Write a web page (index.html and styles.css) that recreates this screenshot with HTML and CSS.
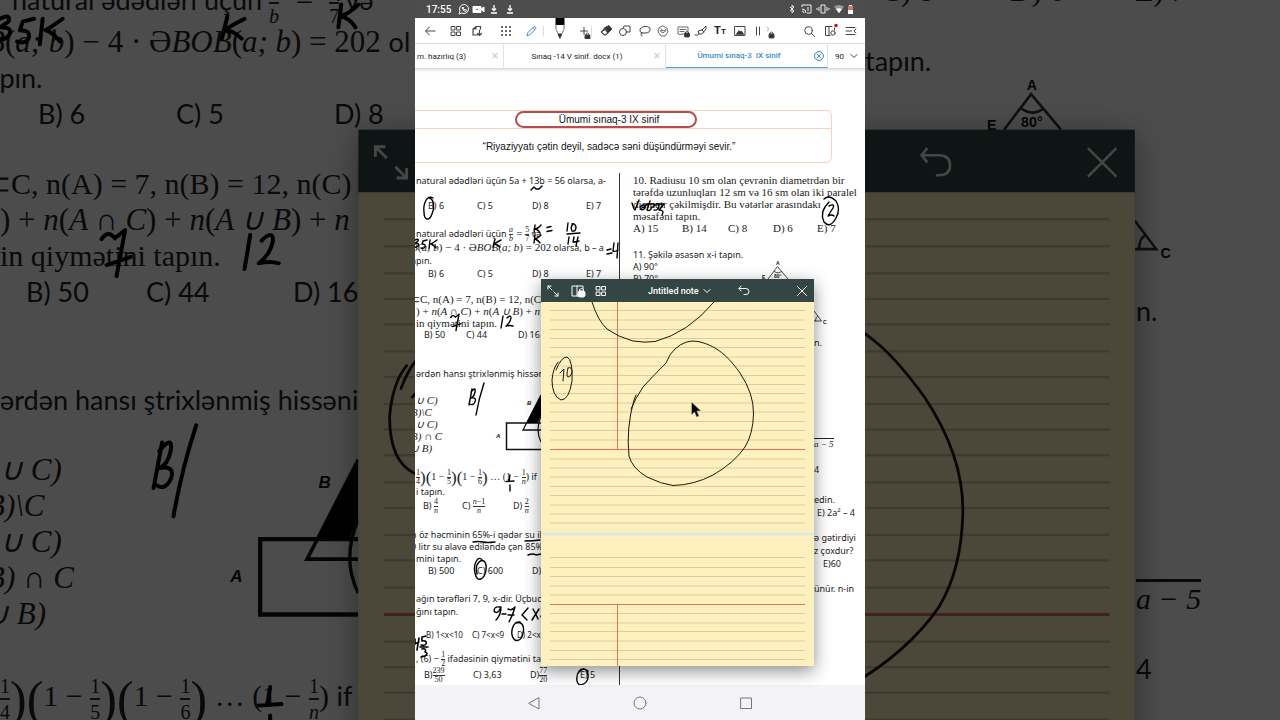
FILE: index.html
```html
<!DOCTYPE html>
<html lang="az">
<head>
<meta charset="utf-8">
<title>Ümumi sınaq-3 IX sinif</title>
<link rel="stylesheet" href="styles.css">
</head>
<body>
<svg class="defs" aria-hidden="true">
  <defs>
    <g id="figures" fill="none" stroke="#111" stroke-width="1">
      <path d="M541 423H506.500V449.500H541" stroke-width="1.500"/>
      <path d="M541 430H523L541 395M541 406" stroke-width="1.300"/>
      <path d="M541 395V416Q539 419 538 423H526.500Z" fill="#000" stroke="none"/>
      <path d="M541 416Q535 430 541 442" stroke-width="1.200"/>
      <path d="M768 279L777.500 266.500L788 279M774 271.500Q778 274.500 782 271.500M814 311L821.500 321H814M815.500 321Q815.500 317 818 316" stroke="#333" stroke-width=".9"/>
      <g class="figure-label">
        <text x="527" y="405">B</text><text x="496" y="438">A</text>
        <text class="figure-small" x="776" y="265">A</text><text class="figure-small" x="762" y="279">E</text>
        <text class="figure-small" x="774" y="278">80°</text><text class="figure-small" x="823" y="324">C</text>
      </g>
    </g>
    <g id="ink" fill="none" stroke="#000" stroke-width="1.400" stroke-linecap="round" stroke-linejoin="round">
      <path d="M531 190l3-3 2 2h3l3-3"/>
      <path d="M433 198c-6-4-10 6-9 14 0 8 5 10 8 2 3-7 2-15-3-16"/>
      <path d="M535 225l-1 8M541 225q-3 4-7 4 4 0 6 4M535 235l-1 8M541 235q-3 3-6 4 3 1 5 4M547 227.500l4-1M547 231.500l5-1"/>
      <path d="M568 223l-1 8M573 224q-3 3-1 7 4 1 4-4-1-4-4-3M567 234l13-1M569 237l-1 7M574 237l-1 5 6-1M578 237l-2 9"/>
      <path d="M415 243q4-2 3 1l-3 2q5 0 3 3-2 2-4 1M427 243l-4 1-1 3q4 0 3 3-1 2-4 1M430 243l-1 9M437 243q-4 3-6 4 3 1 5 4" transform="translate(0 -3)"/>
      <path d="M495 239l-2 8M501 240q-4 2-7 4 3 0 6 3M607 250l4-1M607 254l5-1M614 243l-1 8q2 1 5-1M618 243l-1 15"/>
      <path d="M450.700 317.500Q453 314 455.400 317.200L459 314.300L456 330.500M452.500 326.600L461 323.700M503 316l-2 12M507 318q4-4 4 0-1 5-5 8 4-1 7 0"/>
      <path d="M472 389l-3 16M471 392q5-6 4 0-1 5-4 6 6-1 4 4-2 4-5 2M484 383q-5 15-8 32"/>
      <path d="M510 475l-1 6M506 481.500l8-.5M510 485v6M473 542q6-1 10 0t12 0M525 541q8 0 15-1M528 555q5-2 8 0l5-1"/>
      <path d="M483 561c-5-8-10 4-8 12 2 11 10 6 11-3 1-8-3-12-7-8-3 3-3 8-2 12"/>
      <path d="M500 607q-6-1-6 4 2 3 5 0l2-4q0 8-5 13M502 614h4M508 609q4 2 7-2-2 8-6 15M508 615h6M528 608l-6 7 5 5M533 609q3 5 5 10M539 609l-7 11M541 616v1"/>
      <path d="M520 622c-6-1-9 7-8 13 2 9 10 6 11-2 2-8-2-12-7-10M588 671c-8-6-12 3-11 10 1 7 10 3 11-3 1-8-4-12-9-6"/>
      <path d="M415 639v5l4-2M419 638l-2 12M426 636l-4 1v4q5-1 4 3-1 2-5 1M420 647h8M422 649q5-1 3 3 4 1 0 4l-4 1" stroke-width="1.600"/>
      <path d="M632 203q2 7 3 7l4-10M640 207q5-5 5 1-2 3-5 1l7-4M650 201l-3 9q3 2 5-3M646 204h8M653 207q5-6 6-1-1 5-5 4M658 204h6l-5 6q6 0 3 5"/>
      <path d="M824 199q5-5 12 2 5 8 0 17-6 11-12 4-5-10 5-20M829 206q6-3 4 2l-5 8q4-2 6 0"/>
    </g>
    <g id="ruled-paper">
      <rect x="541" y="301" width="273" height="365" fill="#fef1bf"/>
      <path stroke="#cfc49b" stroke-width=".8" d="M550 310.500H805M550 320H805M550 329.500H805M550 338.500H805M550 347.500H805M550 357H805M550 366H805M550 375.500H805M550 384.500H805M550 393.500H805M550 403H805M550 412H805M550 421.500H805M550 430.500H805M550 440H805M550 459H805M550 468H805M550 477H805M550 486.500H805M550 495.500H805M550 505H805M550 514H805M550 523H805M550 557.500H805M550 567.500H805M550 576.500H805M550 586H805M550 595H805M550 613.500H805M550 623H805M550 631.500H805M550 641H805M550 650.500H805M550 659.500H805"/>
      <path stroke="#e0705c" d="M550 449.500H805M550 604.500H805M617.500 302V449M617.500 604V666"/>
      <path stroke="#e3e7de" stroke-width="3" d="M541 534H814"/>
      <g fill="none" stroke="#1d180d" stroke-width="1" stroke-linecap="round" stroke-linejoin="round">
        <path d="M592 302Q598 321 607 329Q618 337 633 341Q646 343 655 341.500Q688 333 714 302"/>
        <path d="M631 409Q635 399 643 387Q655 374 666 363Q670 353 675 349Q686 339 698 341.500C720 346 732 362 740 373Q754 394 753.500 414Q753 434 745 447Q734 463 713 475Q694 485 673 485.500Q661 484 647 477Q632 468 629 456Q626 428 634 400L636 395"/>
        <path d="M556 370Q561 357 567 357Q573 360 572 381Q569 400 561 400Q552 396 552 380Q553 368 558 362M560 373l4-4-1 12M568 368q-2 8 0 9 3 0 4-5 0-6-4-4"/>
      </g>
    </g>
    <g id="lock"><rect x="-2.500" y="0" width="5" height="4" rx=".8" fill="#333"/><path d="M-1.500 0v-1q1.500-2 3 0v1" fill="none" stroke="#333" stroke-width=".8"/></g>
  </defs>
</svg>

<main class="stage">
  <div class="backdrop" aria-hidden="true">
    <div class="enlarged enlarged-left">
      <p class="shift">natural ədədləri üçün <span class="frac"><i>a</i><i>b</i></span> <span class="math">&nbsp;=&nbsp;</span> <span class="frac"><span>5</span><span>7</span></span> və</p>
      <p class="math cut">B<span class="up">(</span>a; b<span class="up">)</span> <span class="up">− 4 · Ə</span>BOB<span class="up">(</span>a; b<span class="up">) = 202</span> <span class="sans">ol</span></p>
      <p class="cut">apın.</p>
      <p class="big-options"><span>B) 6</span><span>C) 5</span><span>D) 8</span></p>
      <p class="serif cut big-set">⊂C, n(A) = 7, n(B) = 12, n(C) =</p>
      <p class="math"><span class="up">) +</span> n<span class="up">(</span>A ∩ C<span class="up">) +</span> n<span class="up">(</span>A ∪ B<span class="up">) +</span> n</p>
      <p class="serif">in qiymətini tapın.</p>
      <p class="big-options big-options-b"><span>B) 50</span><span>C) 44</span><span>D) 16</span></p>
      <p class="big-ask">ərdən hansı ştrixlənmiş hissəni</p>
      <div class="big-list math"><p>∪ C)</p><p class="cut">B)\C</p><p>∪ C)</p><p class="cut">B) ∩ C</p><p class="cut">∪ B)</p></div>
      <p class="product serif"><span class="frac"><span>1</span><span>4</span></span><b>)</b><b>(</b>1 − <span class="frac"><span>1</span><span>5</span></span><b>)</b><b>(</b>1 − <span class="frac"><span>1</span><span>6</span></span><b>)</b> … (1 − <span class="frac"><span>1</span><i>n</i></span>) <span class="sans">if</span></p>
    </div>
    <svg class="overlay" viewBox="415 233.400 146 253.200" preserveAspectRatio="xMinYMid slice">
      <use href="#figures"/><use href="#ink"/>
      <g class="shaded"><rect x="541" y="279" width="273" height="23" fill="#344644"/><use href="#ruled-paper"/></g>
      <path d="M547 287l4 4M547 290.500V287h3.500M554 294l4 4M558 294.500V298h-3.500" transform="translate(0 -2)" fill="none" stroke="#e8efed"/>
    </svg>
  </div>

  <section class="screen">
    <header class="status">
      <time>17:55</time>
      <svg viewBox="0 0 60 14" width="60" height="14" fill="none" stroke="#fff">
        <path d="M2 12l1-3a4.500 4.500 0 1 1 2 2zM5 5.500q1 4 4 4l1-1-1.500-1-1 .5-1-1.500.3-1z"/>
        <path d="M16 4.500h8v6h-8zM24 7l3-2v5z" fill="#fff"/><circle cx="20" cy="7.500" r=".8" fill="#4d4d4d" stroke="none"/>
        <path d="M37 3v5M35 6.500l2 2 2-2M34 11h6M53 3v5M51 6.500l2 2 2-2M50 11h6" stroke-width="1.300"/>
      </svg>
      <svg class="status-right" viewBox="0 0 78 14" width="78" height="14" fill="none" stroke="#eee">
        <path d="M3 5l4 4-2 2V3l2 2-4 4"/>
        <path d="M15 5V3h9v8h-4M15 7q4 0 4 4M15 9q2 0 2 2M21 5v4"/>
        <path d="M34 3h4v8h-4zM32 5v4M40 5v4M30 6v2M42 6v2"/>
        <path d="M47 4.500q5-3 10 0l-5 7z" fill="#999" stroke="none"/><path d="M49 7q3-1.500 6 0l-3 4z" fill="#fff" stroke="none"/>
        <path d="M61 4h1V3h3v1h1v8h-5z" fill="#fff" stroke="none"/><path d="M61 4h5v4h-5z" fill="#c77c65" stroke="none"/>
      </svg>
    </header>

    <nav class="toolbar" aria-label="Tools">
      <button aria-label="Back"><svg viewBox="0 0 16 16"><path d="M13 8H4M7.500 4L3.500 8l4 4"/></svg></button>
      <button aria-label="Thumbnails"><svg viewBox="0 0 16 16"><path d="M3.500 3.500h3.500V7H3.500zM9 3.500h3.500V7H9zM3.500 9h3.500v3.500H3.500zM9 9h3.500v3.500H9z"/></svg></button>
      <button aria-label="Export page"><svg viewBox="0 0 16 16"><path d="M8.500 12H4V6l3-2.500h4.500V6M7 3.500V6H4M10.500 7v5M8.500 10.500l2 2 2-2" stroke-width="1.200"/></svg></button>
      <button aria-label="Apps"><svg viewBox="0 0 16 16"><path d="M4 4h.1M8 4h.1M12 4h.1M4 8h.1M8 8h.1M12 8h.1M4 12h.1M8 12h.1M12 12h.1" stroke-width="2"/></svg></button>
      <button aria-label="Edit" class="blue"><svg viewBox="0 0 16 16"><path d="M4 12.500l1-3 6-6q2 0 2 2l-6 6zM10 5l1.500 1.500"/></svg></button>
      <button aria-label="Pen" class="divided pen-tool"><svg viewBox="0 0 16 25"><path d="M3.500 0h9v7h-9z" fill="#000" stroke="none"/><path d="M4 7v4l4 9 4-9V7" stroke="#777"/><path d="M6.500 16h3L8 20z" fill="#000"/></svg></button>
      <button aria-label="Add"><svg viewBox="0 0 16 16"><path d="M8 4.500v7M4.500 8h7"/><use href="#lock" x="11.500" y="12"/></svg></button>
      <button aria-label="Eraser" class="divided"><svg viewBox="0 0 16 16"><path d="M7 4.500l4-2 3 3.500-4 4z" fill="#333"/><path d="M7 4.500L3 9l3 3h2l2-2z" fill="#444"/><path d="M4 9l3-2 2 3-2 1.500z" fill="#fff" stroke="none"/></svg></button>
      <button aria-label="Shapes"><svg viewBox="0 0 16 16"><circle cx="6" cy="9" r="3.500"/><path d="M6 5l1-2h6v6h-3"/></svg></button>
      <button aria-label="Lasso"><svg viewBox="0 0 16 16"><path d="M5 10q-3-1-2-4 5-5 10-1 1 5-5 5H6q-2-1-2 1l1 2"/></svg></button>
      <button aria-label="Stickers"><svg viewBox="0 0 16 16"><path d="M8 3l4 2 1 4-3 4H6L3 9l1-4zM5.500 8q2 4 5 0zM6 6l1 .5M10 6l1 1" stroke-width=".8"/></svg></button>
      <button aria-label="Comment"><svg viewBox="0 0 16 16"><path d="M9 11H6l-1 1-1-1H3V4h10v4M5 6.500h6M5 8.500h4" stroke-width=".8"/><use href="#lock" x="12" y="10"/></svg></button>
      <button aria-label="Brush"><svg viewBox="0 0 16 16"><path d="M2 12q3 1 4-1l-1-3 4-1 4-4v3l-3 4q-2 2-4 1M9 7l2 2"/></svg></button>
      <button aria-label="Text" class="text-tool"><span>T<small>T</small></span></button>
      <button aria-label="Image"><svg viewBox="0 0 16 16"><path d="M3 3.500h10v9H3z"/><path d="M4.500 11L7 7.500 8.500 9l1-1 2 3z" fill="#333"/></svg></button>
      <button aria-label="Ruler"><svg viewBox="0 0 16 16"><path d="M6.500 4v8M9.500 4v8"/></svg></button>
      <button aria-label="Locked tool"><svg viewBox="0 0 16 16"><path d="M5.500 4l1 2-1 2" stroke="#8bb8de"/><use href="#lock" x="9.500" y="11"/></svg></button>
      <button aria-label="Search"><svg viewBox="0 0 16 16"><circle cx="7.500" cy="7.500" r="3.800"/><path d="M10.500 10.500l3 3"/></svg></button>
      <button aria-label="View settings"><svg viewBox="0 0 16 16"><path d="M8 12.500H3.500v-9H10M7 3.500v9M12.500 7V5"/><circle cx="11" cy="10" r="2.200"/><circle cx="14" cy="2.500" r="1.800" fill="#c9151b" stroke="none"/></svg></button>
      <button aria-label="Menu"><svg viewBox="0 0 16 16"><path d="M3 4.500h9M3 8h5.500M3 11.500h9M13 6l-2 2 2 2"/></svg></button>
    </nav>

    <nav class="tabs" aria-label="Open documents">
      <div class="tab tab-first"><a href="#">m. hazırlıq (3)</a><button aria-label="Close tab">×</button></div>
      <div class="tab"><a href="#">Sınaq -14 V sinif. docx (1)</a><button aria-label="Close tab">×</button></div>
      <div class="tab active"><a href="#">Ümumi sınaq-3&nbsp; IX sinif</a><button aria-label="Close tab"><svg viewBox="0 0 12 12" width="12" height="12"><circle cx="6" cy="6" r="4.500"/><path d="M4 4l4 4M8 4l-4 4"/></svg></button></div>
      <button class="pages">90 <svg viewBox="0 0 8 8" width="8" height="8"><path d="M1 2.500l3 3 3-3"/></svg></button>
    </nav>

    <article class="document">
      <div class="banner"><h1><span>Ümumi sınaq-3 IX sinif</span></h1><p>“Riyaziyyatı çətin deyil, sadəcə səni düşündürməyi sevir.”</p></div>
      <div class="columns">
        <div class="column">
          <section class="question">
            <p>natural ədədləri üçün 5a + 13b = 56 olarsa, a-</p>
            <p class="options after-gap"><span>B) 6</span><span>C) 5</span><span>D) 8</span><span>E) 7</span></p>
          </section>
          <section class="question mt-13">
            <p class="tall">natural ədədləri üçün <span class="frac"><i>a</i><i>b</i></span> <span class="math">=</span> <span class="frac"><span>5</span><span>7</span></span> və</p>
            <p class="cut"><span class="math">B<span class="up">(</span>a; b<span class="up">) − 4 · Ə</span>BOB<span class="up">(</span>a; b<span class="up">) = 202</span></span> olarsa, b – a</p>
            <p class="cut">apın.</p>
            <p class="options"><span>B) 6</span><span>C) 5</span><span>D) 8</span><span>E) 7</span></p>
          </section>
          <section class="question tight mt-13">
            <p class="serif cut">⊂C, n(A) = 7, n(B) = 12, n(C) =</p>
            <p class="math"><span class="up">) +</span> n<span class="up">(</span>A ∩ C<span class="up">) +</span> n<span class="up">(</span>A ∪ B<span class="up">) +</span> n</p>
            <p class="serif">in qiymətini tapın.</p>
            <p class="options options-b"><span>B) 50</span><span>C) 44</span><span>D) 16</span></p>
          </section>
          <section class="question tight mt-27">
            <p>ərdən hansı ştrixlənmiş hissəni</p>
            <div class="choices math"><p>∪ C)</p><p class="cut">B)\C</p><p>∪ C)</p><p class="cut">B) ∩ C</p><p class="cut">∪ B)</p></div>
          </section>
          <section class="question mt-15">
            <p class="product serif tall"><span class="frac"><span>1</span><span>4</span></span><b>)</b><b>(</b>1 − <span class="frac"><span>1</span><span>5</span></span><b>)</b><b>(</b>1 − <span class="frac"><span>1</span><span>6</span></span><b>)</b> … (1 − <span class="frac"><span>1</span><i>n</i></span>) <span class="sans">if</span></p>
            <p>i tapın.</p>
            <p class="options options-c tall"><span>B) <span class="frac"><span>4</span><i>n</i></span></span><span>C) <span class="frac"><span><i>n</i>−1</span><i>n</i></span></span><span>D) <span class="frac"><span>2</span><i>n</i></span></span></p>
          </section>
          <section class="question tight mt-15">
            <p class="cut">n öz həcminin 65%-i qədər su il</p>
            <p class="cut">0 litr su əlavə ediləndə çən 85%</p>
            <p>mini tapın.</p>
            <p class="options"><span>B) 500</span><span>C) 600</span><span>D) 7</span></p>
          </section>
          <section class="question mt-15">
            <p>ağın tərəfləri 7, 9, x-dir. Üçbuc</p>
            <p>ğını tapın.</p>
            <p class="options options-d mt-10"><span>B) 1&lt;x&lt;10</span><span>C) 7&lt;x&lt;9</span><span>D) 2&lt;x&lt;16</span></p>
          </section>
          <section class="question mt-10">
            <p class="tall">, (6) − <span class="frac"><span>1</span><span>2</span></span> ifadəsinin qiymətini tapın.</p>
            <p class="options options-e tall"><span>B)<span class="frac"><span>239</span><span>50</span></span></span><span>C) 3,63</span><span>D)<span class="frac"><span>77</span><span>20</span></span></span><span>E) 5</span></p>
          </section>
        </div>
        <div class="column column-right">
          <section class="question tight serif">
            <p>10. Radiusu 10 sm olan çevrənin diametrdən bir</p>
            <p>tərəfdə uzunluqları 12 sm və 16 sm olan iki paralel</p>
            <p>diametr çəkilmişdir. Bu vətərlər arasındakı</p>
            <p>məsafəni tapın.</p>
            <p class="options options-f"><span>A) 15</span><span>B) 14</span><span>C) 8</span><span>D) 6</span><span>E) 7</span></p>
          </section>
          <section class="question tight mt-15">
            <p>11. Şəkilə əsasən x-i tapın.</p><p>A) 90°</p><p>B) 70°</p>
          </section>
          <div class="tails">
            <p>n.</p>
            <p class="tail-root"><span class="math rooted">a − 5</span></p>
            <p class="tail-four">4</p>
            <p class="tail-next">edin.</p><p class="nudge">E) 2a<sup>2</sup> – 4</p>
            <p class="tail-next-small">ə gətirdiyi</p><p>z çoxdur?</p><p class="nudge-more">E)60</p>
            <p class="tail-next-small">ünür. n-in</p>
          </div>
        </div>
      </div>
      <svg class="annotations" viewBox="415 69 450 616" preserveAspectRatio="xMinYMin meet" aria-hidden="true"><use href="#figures"/><use href="#ink"/></svg>
    </article>

    <aside class="note">
      <header class="note-bar">
        <button aria-label="Resize"><svg viewBox="0 0 16 16"><path d="M3 3l4 4M3 6V3h3M9 9l4 4M13 10v3h-3"/></svg></button>
        <button aria-label="Lock view"><svg viewBox="0 0 16 16"><path d="M8 13H2V3h11v3M7 3v10"/><rect x="8" y="8" width="7" height="6" rx="2" fill="#fff"/><path d="M9.500 8V6.500q2-2 4 0V8"/></svg></button>
        <button aria-label="Pages"><svg viewBox="0 0 16 16"><path d="M3.500 3.500h3.500V7H3.500zM9 3.500h3.500V7H9zM3.500 9h3.500v3.500H3.500zM9 9h3.500v3.500H9z"/></svg></button>
        <button class="note-title">Jntitled note <svg viewBox="0 0 8 8"><path d="M1 2.500l3 3 3-3"/></svg></button>
        <button aria-label="Undo"><svg viewBox="0 0 16 16"><path d="M5 3L3 5.500 5 8M3 5.500h7q3 0 3 3t-3 3H8"/></svg></button>
        <button aria-label="Close"><svg viewBox="0 0 16 16"><path d="M3.500 3.500l9 9M12.500 3.500l-9 9"/></svg></button>
      </header>
      <svg class="paper" viewBox="541 302 273 364"><use href="#ruled-paper"/>
        <path d="M691.500 402v13l3-3 2 5 2.500-1-2-5h4z" fill="#0b0b12" stroke="#c9c3ad" stroke-width=".5"/></svg>
    </aside>

    <footer class="system">
      <button aria-label="Back"><svg viewBox="0 0 16 16"><path d="M13 3v11L3 8.500z"/></svg></button>
      <button aria-label="Home"><svg viewBox="0 0 16 16"><circle cx="8" cy="8" r="6"/></svg></button>
      <button aria-label="Recent"><svg viewBox="0 0 16 16"><path d="M3 3h10.500v10.500H3z"/></svg></button>
    </footer>
  </section>

  <div class="backdrop" aria-hidden="true">
    <div class="enlarged enlarged-right">
      <p class="serif big-tail-options"><span>C) 8</span><span>D) 6</span><span>E) 7</span></p>
      <p class="big-found">tapın.</p>
      <div class="big-tails"><p>n.</p><p class="big-root"><span class="math rooted">a − 5</span></p><p class="big-four">4</p></div>
    </div>
    <svg class="overlay" viewBox="719.100 233.400 146 253.200" preserveAspectRatio="xMinYMid slice">
      <use href="#figures"/>
      <g class="shaded"><rect x="541" y="279" width="273" height="23" fill="#344644"/><use href="#ruled-paper"/></g>
      <path d="M741 285.500l-2 2.500 2 2.500M739 288h6q4 0 4 3.500t-4 3.500h-1M797.500 285.500l10 10M807.500 285.500l-10 10" fill="none" stroke="#e8efed" stroke-width=".9"/>
    </svg>
  </div>
</main>
</body>
</html>
```
FILE: styles.css
```css
* { box-sizing: border-box; }
body { margin: 0; background: #4c4c4c; font-family: Roboto, "Liberation Sans", sans-serif; color: #222; }
p, h1 { margin: 0; font-weight: 400; }
button { margin: 0; padding: 0; border: 0; background: none; color: inherit; font: inherit; }
a { color: inherit; text-decoration: none; }
.defs { position: absolute; width: 0; height: 0; }
.stage { display: grid; grid-template-columns: 1fr minmax(0, 450px) 1fr; height: 100vh; overflow: hidden; }

/* shared maths typography */
.serif, .math { font-family: "Liberation Serif", serif; }
.math { font-style: italic; }
.up { font-style: normal; }
.sans { font-family: Lato, "Noto Sans", sans-serif; font-style: normal; }
.frac { display: inline-flex; flex-direction: column; vertical-align: middle; text-align: center; font-family: "Liberation Serif", serif; font-size: 8px; line-height: 8px; }
.frac > :first-child { border-bottom: 1px solid #333; }
.product b { font-size: 18px; font-weight: 400; vertical-align: middle; }
.rooted { border-top: 1px solid #222; }
.figure-label { font: italic bold 6px "Liberation Sans", sans-serif; fill: #111; stroke: none; }
.figure-small { font: bold 5px "Liberation Sans", sans-serif; }

/* enlarged, dimmed sides */
.backdrop { position: relative; overflow: hidden; background: #fff; }
.backdrop::after { content: ""; position: absolute; inset: 0; background: rgba(0, 0, 0, .7); }
.overlay { position: absolute; inset: 0; width: 100%; height: 100%; }
.shaded { filter: drop-shadow(0 2px 6px rgba(0, 0, 0, .4)); }
.enlarged { font: 27px/36px Lato, "Noto Sans", sans-serif; white-space: nowrap; }
.enlarged .math { font-size: 31px; }
.enlarged .serif { font-size: 30px; }
.enlarged .sans { font-size: 27px; }
.enlarged .frac { font-size: 20px; line-height: 24px; }
.enlarged .frac > :first-child { border-bottom-width: 2px; }
.enlarged .product b { font-size: 50px; }
.enlarged .cut { margin-left: -14px; }
.enlarged-left > p { height: 36px; }
.enlarged-left { margin-top: -22px; }
.enlarged-left .shift { height: 46px; padding-left: 12px; }
.big-options { display: grid; grid-template-columns: 138px 158px 1fr; padding-left: 38px; }
.big-options-b { grid-template-columns: 120px 147px 1fr; padding-left: 26px; }
.enlarged .big-set { margin-top: 34px; }
.big-ask { margin-top: 72px; }
.big-list { margin-top: 34px; }
.enlarged-left .product { margin-top: 42px; line-height: 36px; }
.big-tail-options { display: grid; grid-template-columns: 129px 125px 1fr; padding-left: 16px; margin-top: -27px; }
.big-found { margin-top: 34px; }
.big-tails { margin: 214px 0 0 271px; }
.big-root { margin-top: 252px; }
.big-four { margin-top: 34px; }
.enlarged .rooted { border-top-width: 3px; font-size: 30px; }

/* central screen */
.screen { position: relative; display: flex; flex-direction: column; min-width: 0; overflow: hidden; background: #fff; }
.status { display: flex; align-items: center; height: 18px; flex: none; padding: 0 0 0 11px; background: #4d4d4d; color: #fff; font-size: 10px; font-weight: 500; gap: 6px; }
.status-right { margin-left: auto; }
.toolbar { display: grid; grid-template-columns: 26px 21px 29px 25px 29px 24px 22px 19px 20px 18px 20px 18px 19px 20px 18px 12px 1fr 21px 21px 16px; flex: none; height: 26px; padding: 0 6px 0 7px; align-items: center; border-bottom: 1px solid #e4e4e4; }
.toolbar button { position: relative; width: 16px; height: 16px; }
.toolbar .pen-tool { height: 25px; }
.toolbar svg, .note-bar svg, .system svg, .tabs svg { display: block; fill: none; stroke: #444; stroke-linecap: round; }
.toolbar .blue svg { stroke: #3e8ccc; }
.divided::before { content: ""; position: absolute; left: -7px; top: 3px; height: 10px; border-left: 1px solid #ddd; }
.pen-tool::before { left: -9px; top: 8px; }
.text-tool { font-size: 11px; font-weight: 700; line-height: 16px; }
.text-tool small { font-size: 8px; }
.tabs { display: grid; grid-template-columns: 89fr 162fr 162fr 37fr; flex: none; height: 25px; font-size: 8px; border-bottom: 1px solid #ddd; box-shadow: 0 1px 3px rgba(0, 0, 0, .15); }
.tab { display: flex; align-items: center; border-right: 1px solid #e2e2e2; padding-right: 1px; white-space: nowrap; }
.tab a { flex: 1; text-align: center; }
.tab button { display: grid; place-items: center; width: 14px; color: #ccc; font-size: 12px; }
.tab-first a { padding-left: 2px; text-align: left; }
.active { color: #3e8ccc; font-weight: 500; border-bottom: 1px solid #5b9fd8; }
.active svg { stroke: #3e8ccc; }
.pages { display: flex; align-items: center; justify-content: center; gap: 6px; }

.document { position: relative; flex: 1; min-height: 0; overflow: hidden; padding-top: 41px; font: 9px/13px "Noto Sans", sans-serif; }
.banner { margin-right: 33px; border: 1px solid #f3d3c4; border-left: 0; border-radius: 0 6px 6px 0; height: 53px; font-family: "Liberation Sans", sans-serif; color: #111; text-align: center; }
.banner h1 { height: 18px; border-bottom: 1px solid #f3d3c4; font-size: 10px; line-height: 13px; }
.banner h1 span { display: inline-block; margin-left: -34px; padding: 0 36px 0 42px; border: 2px solid #b84d4d; border-radius: 9px; }
.banner p { margin-left: -28px; padding-top: 11px; font-size: 10px; }
.columns { display: grid; grid-template-columns: 204px 1fr; margin-top: 10px; }
.column { min-width: 0; padding: 1px 0 0 1px; height: 512px; white-space: nowrap; }
.column-right { padding-left: 13px; border-left: 1px solid #333; }
.question .math, .question.serif, .question .serif { font-size: 11px; }
.question .product { font-size: 10px; }
.question .sans { font-size: 9px; }
.question .product b { font-size: 17px; line-height: 13px; }
.tight { line-height: 12px; }
.tall { height: 16px; line-height: 16px; }
.column .cut { margin-left: -5px; }
.after-gap { margin-top: 12px; }
.mt-10 { margin-top: 10px; }
.mt-13 { margin-top: 13px; }
.mt-15 { margin-top: 15px; }
.mt-27 { margin-top: 27px; }
.choices { margin-top: 14px; }
.options { display: grid; grid-template-columns: 49px 55px 54px 1fr; padding-left: 12px; }
.options-b { grid-template-columns: 42px 52px 1fr; padding-left: 8px; }
.options-c { grid-template-columns: 39px 51px 1fr; padding-left: 7px; }
.options-d { grid-template-columns: 46px 45px 1fr; padding-left: 10px; font-size: 8px; }
.options-e { grid-template-columns: 49px 57px 50px 1fr; padding-left: 8px; }
.options-f { grid-template-columns: 49px 46px 45px 44px 1fr; padding-left: 0; }
.tails { margin: 51px 0 0 181px; }
.tail-root { margin-top: 88px; }
.tail-four { margin-top: 12px; }
.tail-next { margin-top: 17px; }
.tail-next-small { margin-top: 12px; }
.nudge { padding-left: 3px; }
.nudge-more { padding-left: 9px; }
.tails sup { font-size: 6px; line-height: 6px; }
.annotations { position: absolute; inset: 0; width: 100%; }

.note { position: absolute; left: 126px; top: 279px; width: 273px; box-shadow: 0 5px 16px rgba(0, 0, 0, .45); }
.note-bar { display: grid; grid-template-columns: 25px 23px 55px 1fr 58px 16px; align-items: center; height: 23px; padding: 0 4px; background: #344644; color: #fff; }
.note-bar button { width: 16px; height: 16px; }
.note-bar svg { stroke: #fff; }
.note-bar .note-title { display: flex; align-items: center; gap: 4px; width: auto; font-size: 9px; font-weight: 500; white-space: nowrap; }
.note-title svg { width: 8px; }
.paper { display: block; width: 100%; }
.system { display: grid; grid-template-columns: repeat(3, 106px); flex: none; justify-content: center; justify-items: center; align-items: center; height: 35px; background: #f4f4f6; }
.system button { width: 16px; height: 16px; }
.system svg { stroke: #777; stroke-width: 1px; }
```
